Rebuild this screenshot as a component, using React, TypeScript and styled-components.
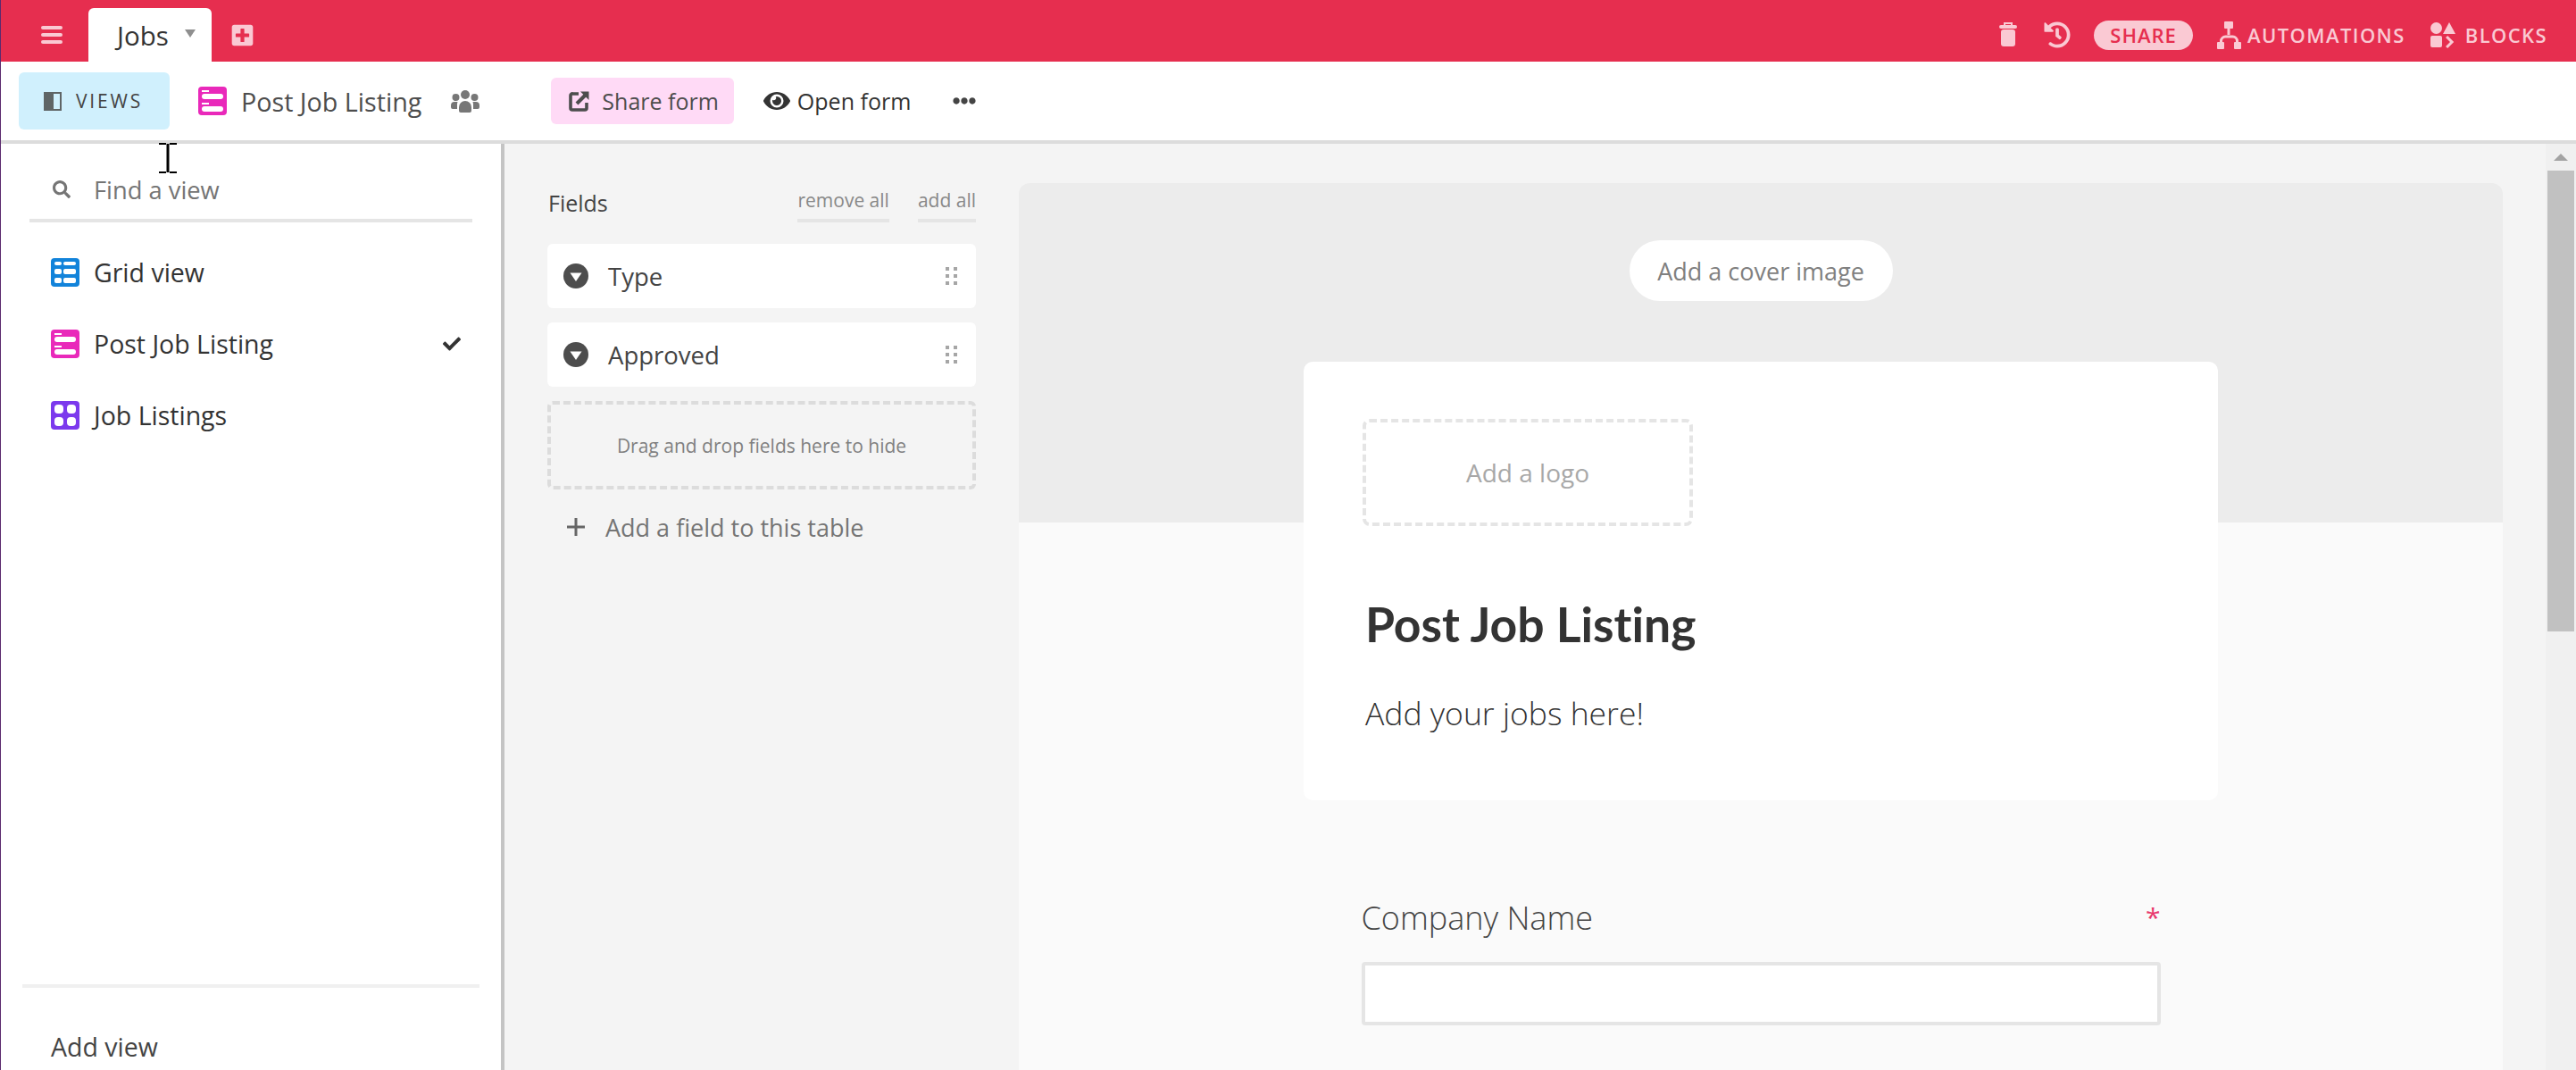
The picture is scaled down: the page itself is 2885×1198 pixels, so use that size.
import * as React from 'react'
import styled, { createGlobalStyle } from 'styled-components'
import { FaCheck, FaEllipsisH, FaEye, FaHistory, FaPlusSquare, FaSearch } from 'react-icons/fa'

const GlobalStyle = createGlobalStyle`
  html, body {
    margin: 0;
    padding: 0;
    background: #fff;
    overflow: hidden;
  }
  * {
    box-sizing: border-box;
  }
  body {
    font-family: "Open Sans", "Noto Sans", sans-serif;
    color: #333;
  }
`

const TINT = '#fac9d3'
const RED = '#e62e4f'

const GridIcon = () => (
  <svg width="32" height="32" viewBox="0 0 32 32">
    <rect width="32" height="32" rx="4" fill="#1283da" />
    <g fill="#fff">
      <rect x="4" y="4" width="8" height="4" rx="2" />
      <rect x="14" y="4" width="14" height="4" rx="2" />
      <rect x="4" y="12" width="8" height="6" rx="2" />
      <rect x="14" y="12" width="14" height="6" rx="2" />
      <rect x="4" y="22" width="8" height="6" rx="2" />
      <rect x="14" y="22" width="14" height="6" rx="2" />
    </g>
  </svg>
)

const FormIcon = () => (
  <svg width="32" height="32" viewBox="0 0 32 32">
    <rect width="32" height="32" rx="4" fill="#e929ba" />
    <g fill="#fff">
      <rect x="4" y="4" width="8" height="2" />
      <rect x="4" y="8" width="24" height="6" rx="3" />
      <rect x="4" y="18" width="8" height="2" />
      <rect x="4" y="22" width="24" height="6" rx="3" />
    </g>
  </svg>
)

const GalleryIcon = () => (
  <svg width="32" height="32" viewBox="0 0 32 32">
    <rect width="32" height="32" rx="4" fill="#7c39ed" />
    <g fill="#fff">
      <rect x="4" y="4" width="10" height="10" rx="4" />
      <rect x="18" y="4" width="10" height="10" rx="4" />
      <rect x="4" y="18" width="10" height="10" rx="4" />
      <rect x="18" y="18" width="10" height="10" rx="4" />
    </g>
  </svg>
)

const MenuIcon = () => (
  <svg width="24" height="20" viewBox="0 0 24 20" fill={TINT}>
    <rect width="24" height="4" rx="2" />
    <rect y="8" width="24" height="4" rx="2" />
    <rect y="16" width="24" height="4" rx="2" />
  </svg>
)

const TrashIcon = () => (
  <svg width="20" height="28" viewBox="0 0 20 28" fill={TINT}>
    <path d="M5 0h10v4h-2V2H7v2H5z" />
    <rect y="3" width="20" height="4" rx="2" />
    <rect x="2" y="8" width="16" height="19" rx="3" />
  </svg>
)

const AutomationIcon = () => (
  <svg width="27" height="31" viewBox="0 0 27 31" fill={TINT}>
    <rect x="8" width="10" height="8" rx="1" />
    <rect x="11.5" y="7" width="3" height="8" />
    <path d="M4.500 24v-2a5 5 0 0 1 5-5h8a5 5 0 0 1 5 5v2" fill="none" stroke={TINT} strokeWidth="3" />
    <rect y="23" width="8" height="8" rx="1" />
    <rect x="19" y="23" width="8" height="8" rx="1" />
  </svg>
)

const BlocksIcon = () => (
  <svg width="28" height="29" viewBox="0 0 28 29" fill={TINT}>
    <circle cx="6.5" cy="6.5" r="6.5" />
    <path d="M21 0l7 13H14z" />
    <rect y="15" width="13" height="13" rx="2" />
    <path d="M17 17l2.200-2 7 7-7 7-2.200-2 5-5z" />
  </svg>
)

const SidebarIcon = () => (
  <svg width="20" height="21" viewBox="0 0 20 21">
    <rect x="1" y="1" width="18" height="19" fill="none" stroke="#5f6566" strokeWidth="2" />
    <rect width="11" height="21" fill="#5f6566" />
  </svg>
)

const ShareIcon = () => (
  <svg width="24" height="24" viewBox="0 0 24 24" fill="none" stroke="#4d4d4d">
    <path d="M11 4H4.500A2 2 0 0 0 2 6v14a2 2 0 0 0 2 2h14a2 2 0 0 0 2-2v-6" strokeWidth="3.600" />
    <path d="M9 15L20 4" strokeWidth="4" />
    <path d="M13 1.500h9.500V11z" fill="#4d4d4d" stroke="none" />
  </svg>
)

const PeopleIcon = () => (
  <svg width="32" height="25" viewBox="0 0 32 25" fill="#777">
    <circle cx="16" cy="5" r="5" />
    <circle cx="5.500" cy="8" r="4" />
    <circle cx="26.500" cy="8" r="4" />
    <path d="M9 19a7 7 0 0 1 14 0v4a2 2 0 0 1-2 2H11a2 2 0 0 1-2-2z" />
    <path d="M0 17a4 4 0 0 1 4-4h3.500A10 10 0 0 0 7 17v4H2a2 2 0 0 1-2-2z" />
    <path d="M32 17a4 4 0 0 0-4-4h-3.500A10 10 0 0 1 25 17v4h5a2 2 0 0 0 2-2z" />
  </svg>
)

const ChoiceIcon = () => (
  <svg width="28" height="28" viewBox="0 0 28 28">
    <circle cx="14" cy="14" r="14" fill="#4d4d4d" />
    <path d="M7.500 10.500h13L14 20z" fill="#fff" />
  </svg>
)

const GripIcon = () => (
  <svg width="13" height="20" viewBox="0 0 13 20" fill="#a6a6a6">
    <rect width="4" height="4" />
    <rect x="9" width="4" height="4" />
    <rect y="8" width="4" height="4" />
    <rect x="9" y="8" width="4" height="4" />
    <rect y="16" width="4" height="4" />
    <rect x="9" y="16" width="4" height="4" />
  </svg>
)

const PlusIcon = () => (
  <svg width="20" height="20" viewBox="0 0 20 20" fill="#666">
    <rect x="8.500" width="3" height="20" />
    <rect y="8.500" width="20" height="3" />
  </svg>
)

const Page = styled.div`
  position: relative;
  display: flex;
  flex-direction: column;
  width: 2885px;
  height: 1198px;
  border-left: 1px solid #5b2a6e;
  overflow: hidden;
`

const TopBar = styled.header`
  flex: 0 0 69px;
  display: flex;
  align-items: center;
  padding: 9px 32px 0 45px;
  background: ${RED};
`

const MenuButton = styled.div`
  display: flex;
`

const Tab = styled.div`
  align-self: flex-end;
  position: relative;
  display: flex;
  align-items: center;
  width: 138px;
  height: 60px;
  margin-left: 29px;
  padding-left: 32px;
  background: #fff;
  border-radius: 6px 6px 0 0;
  font-size: 29.500px;
  color: #333;
`

const TabCaret = styled.span`
  position: absolute;
  left: 108px;
  top: 24px;
  width: 0;
  height: 0;
  border-left: 6px solid transparent;
  border-right: 6px solid transparent;
  border-top: 9px solid #8f8f8f;
`

const AddTab = styled.div`
  display: flex;
  margin-left: 21px;
  color: ${TINT};
  font-size: 27px;
`

const TopActions = styled.div`
  display: flex;
  align-items: center;
  margin-left: auto;
`

const TopIcon = styled.div<{ $left: number }>`
  display: flex;
  margin-left: ${(props) => props.$left}px;
  color: ${TINT};
`

const SharePill = styled.div`
  display: flex;
  align-items: center;
  justify-content: center;
  width: 111px;
  height: 33px;
  margin-left: 26px;
  background: ${TINT};
  border-radius: 17px;
  color: ${RED};
  font-size: 22px;
  font-weight: 600;
  letter-spacing: 1px;
`

const TopAction = styled.div<{ $left: number; $gap: number }>`
  display: flex;
  align-items: center;
  gap: ${(props) => props.$gap}px;
  margin-left: ${(props) => props.$left}px;
  color: ${TINT};
  font-size: 22px;
  font-weight: 600;
  letter-spacing: 1.400px;
`

const SubBar = styled.div`
  flex: 0 0 92px;
  display: flex;
  align-items: center;
  padding-left: 20px;
  background: #fff;
  border-bottom: 4px solid #dcdcdc;
`

const ViewsButton = styled.div`
  display: flex;
  align-items: center;
  gap: 16px;
  width: 169px;
  height: 64px;
  padding-left: 28px;
  background: #d0f0fd;
  border-radius: 6px;
  color: #444;
  font-size: 21px;
  font-weight: 500;
  letter-spacing: 2.800px;
`

const ViewName = styled.div`
  display: flex;
  align-items: center;
  gap: 16px;
  margin-left: 32px;
  color: #4d4d4d;
  font-size: 28.700px;
  white-space: nowrap;
`

const People = styled.div`
  display: flex;
  margin-left: 33px;
`

const FormAction = styled.div<{ $share?: boolean }>`
  display: flex;
  align-items: center;
  gap: ${(props) => (props.$share ? 13 : 8)}px;
  height: 52px;
  padding: 0 17px 0 20px;
  margin-left: ${(props) => (props.$share ? 80 : 13)}px;
  background: ${(props) => (props.$share ? '#ffdaf6' : 'transparent')};
  border-radius: 6px;
  color: ${(props) => (props.$share ? '#4d4d4d' : '#333')};
  font-size: 25px;
  font-weight: 500;
  white-space: nowrap;

  svg {
    flex: none;
  }
`

const MoreButton = styled.div`
  display: flex;
  margin-left: 30px;
  color: #444;
  font-size: 26px;
`

const Body = styled.div`
  flex: 1;
  min-height: 0;
  display: flex;
`

const Sidebar = styled.aside`
  flex: 0 0 564px;
  display: flex;
  flex-direction: column;
  background: #fff;
  border-right: 4px solid #c4c4c4;
`

const SearchRow = styled.div`
  flex: 0 0 88px;
  display: flex;
  align-items: center;
  margin: 0 32px;
  padding: 18px 0 0 26px;
  border-bottom: 4px solid #e5e5e5;
  color: #757575;
  font-size: 27.300px;

  svg {
    margin-right: 26px;
    font-size: 20px;
  }
`

const ViewList = styled.div`
  display: flex;
  flex-direction: column;
  padding: 16px 45px 0 56px;
`

const ViewRow = styled.div`
  display: flex;
  align-items: center;
  height: 80px;
  gap: 16px;
  color: #333;
  font-size: 28.500px;
  font-weight: 500;

  svg:last-child:not(:first-child) {
    margin-left: auto;
    font-size: 20px;
    color: #333;
  }
`

const SidebarFooter = styled.div`
  margin: auto 24px 0;
  height: 96px;
  padding: 46px 32px 0;
  border-top: 4px solid #f0f0f0;
  color: #444;
  font-size: 28.500px;
  font-weight: 500;
  line-height: 40px;
`

const Workspace = styled.main`
  flex: 1;
  min-width: 0;
  display: flex;
  gap: 48px;
  padding: 44px 0 0 48px;
  background: #f4f4f4;
`

const FieldsColumn = styled.section`
  flex: 0 0 480px;
  display: flex;
  flex-direction: column;
`

const FieldsHeader = styled.div`
  display: flex;
  align-items: flex-end;
  height: 44px;
  margin-bottom: 24px;
`

const FieldsTitle = styled.div`
  align-self: center;
  margin-right: auto;
  color: #444;
  font-size: 25px;
  padding-left: 1px;
`

const LinkAction = styled.div<{ $left: number }>`
  margin-left: ${(props) => props.$left}px;
  padding: 1px 0 7px;
  border-bottom: 4px solid #e5e5e5;
  color: #888;
  font-size: 21px;
  line-height: 28px;
`

const FieldCard = styled.div`
  display: flex;
  align-items: center;
  height: 72px;
  margin-bottom: 16px;
  padding: 0 21px 0 18px;
  background: #fff;
  border-radius: 6px;
  color: #444;
  font-size: 27.500px;

  svg:last-child {
    margin-left: auto;
  }
`

const FieldName = styled.span`
  margin-left: 22px;
`

const HideZone = styled.div`
  display: flex;
  align-items: center;
  justify-content: center;
  height: 99px;
  border: 4px dashed #dcdcdc;
  border-radius: 6px;
  color: #808080;
  font-size: 21px;
`

const AddField = styled.div`
  display: flex;
  align-items: center;
  gap: 23px;
  height: 44px;
  margin-top: 20px;
  padding-left: 22px;
  color: #757575;
  font-size: 27px;
`

const FormPane = styled.section`
  flex: 0 0 1662px;
  display: flex;
  flex-direction: column;
  align-items: center;
  background: #fafafa;
  border-radius: 12px 12px 0 0;
  overflow: hidden;
`

const Cover = styled.div`
  align-self: stretch;
  flex: 0 0 380px;
  display: flex;
  justify-content: center;
  padding-top: 64px;
  background: #ececec;
`

const CoverButton = styled.div`
  display: flex;
  align-items: center;
  justify-content: center;
  width: 295px;
  height: 68px;
  background: #fff;
  border-radius: 34px;
  color: #808080;
  font-size: 27px;
`

const HeaderCard = styled.div`
  flex: none;
  width: 1024px;
  height: 491px;
  margin-top: -180px;
  padding: 64px 66px 0;
  background: #fff;
  border-radius: 10px;
`

const LogoBox = styled.div`
  display: flex;
  align-items: center;
  justify-content: center;
  width: 370px;
  height: 120px;
  border: 4px dashed #e5e5e5;
  border-radius: 8px;
  color: #a8a8a8;
  font-size: 28px;
`

const FormTitle = styled.h1`
  margin: 73px 0 0 3px;
  font-family: Lato, "Open Sans", sans-serif;
  font-size: 53.500px;
  font-weight: 700;
  line-height: 72px;
  font-variant-ligatures: none;
  color: #333;
`

const FormSubtitle = styled.p`
  margin: 42px 0 0 3px;
  font-size: 35.500px;
  font-weight: 300;
  line-height: 44px;
  color: #333;
`

const FieldBlock = styled.div`
  flex: none;
  width: 895px;
  margin-top: 110px;
`

const FieldLabelRow = styled.div`
  display: flex;
  justify-content: space-between;
  align-items: flex-start;
  height: 56px;
  font-size: 36px;
  font-weight: 300;
  line-height: 44px;
  color: #444;
`

const Required = styled.span`
  margin-top: 6px;
  color: #e8386d;
  font-size: 30px;
  font-weight: 400;
  line-height: 30px;
`

const TextBox = styled.div`
  height: 71px;
  margin-top: 15px;
  background: #fff;
  border: 4px solid #e5e5e5;
  border-radius: 4px;
`

const ScrollTrack = styled.div`
  flex: 0 0 34px;
  display: flex;
  flex-direction: column;
  align-items: center;
  margin-top: -44px;
  background: #f0f0f0;
`

const ScrollArrow = styled.span`
  margin-top: 11px;
  width: 0;
  height: 0;
  border-left: 8px solid transparent;
  border-right: 8px solid transparent;
  border-bottom: 8px solid #a3a3a3;
`

const ScrollThumb = styled.div`
  width: 30px;
  height: 516px;
  margin-top: 11px;
  background: #c1c1c1;
`

const TextCursor = styled.svg`
  position: absolute;
  left: 177px;
  top: 160px;
`

export default function App() {
  return (
    <Page>
      <GlobalStyle />
      <TopBar>
        <MenuButton>
          <MenuIcon />
        </MenuButton>
        <Tab>
          Jobs
          <TabCaret />
        </Tab>
        <AddTab>
          <FaPlusSquare />
        </AddTab>
        <TopActions>
          <TopIcon $left={0}>
            <TrashIcon />
          </TopIcon>
          <TopIcon $left={30}>
            <FaHistory size={30} />
          </TopIcon>
          <SharePill>SHARE</SharePill>
          <TopAction $left={27} $gap={7}>
            <AutomationIcon />
            AUTOMATIONS
          </TopAction>
          <TopAction $left={28} $gap={11}>
            <BlocksIcon />
            BLOCKS
          </TopAction>
        </TopActions>
      </TopBar>
      <SubBar>
        <ViewsButton>
          <SidebarIcon />
          VIEWS
        </ViewsButton>
        <ViewName>
          <FormIcon />
          Post Job Listing
        </ViewName>
        <People>
          <PeopleIcon />
        </People>
        <FormAction $share>
          <ShareIcon />
          Share form
        </FormAction>
        <FormAction>
          <FaEye size={30} />
          Open form
        </FormAction>
        <MoreButton>
          <FaEllipsisH />
        </MoreButton>
      </SubBar>
      <Body>
        <Sidebar>
          <SearchRow>
            <FaSearch />
            Find a view
          </SearchRow>
          <ViewList>
            <ViewRow>
              <GridIcon />
              Grid view
            </ViewRow>
            <ViewRow>
              <FormIcon />
              Post Job Listing
              <FaCheck />
            </ViewRow>
            <ViewRow>
              <GalleryIcon />
              Job Listings
            </ViewRow>
          </ViewList>
          <SidebarFooter>Add view</SidebarFooter>
        </Sidebar>
        <Workspace>
          <FieldsColumn>
            <FieldsHeader>
              <FieldsTitle>Fields</FieldsTitle>
              <LinkAction $left={0}>remove all</LinkAction>
              <LinkAction $left={32}>add all</LinkAction>
            </FieldsHeader>
            <FieldCard>
              <ChoiceIcon />
              <FieldName>Type</FieldName>
              <GripIcon />
            </FieldCard>
            <FieldCard>
              <ChoiceIcon />
              <FieldName>Approved</FieldName>
              <GripIcon />
            </FieldCard>
            <HideZone>Drag and drop fields here to hide</HideZone>
            <AddField>
              <PlusIcon />
              Add a field to this table
            </AddField>
          </FieldsColumn>
          <FormPane>
            <Cover>
              <CoverButton>Add a cover image</CoverButton>
            </Cover>
            <HeaderCard>
              <LogoBox>Add a logo</LogoBox>
              <FormTitle>Post Job Listing</FormTitle>
              <FormSubtitle>Add your jobs here!</FormSubtitle>
            </HeaderCard>
            <FieldBlock>
              <FieldLabelRow>
                Company Name
                <Required>*</Required>
              </FieldLabelRow>
              <TextBox />
            </FieldBlock>
          </FormPane>
          <ScrollTrack>
            <ScrollArrow />
            <ScrollThumb />
          </ScrollTrack>
        </Workspace>
      </Body>
      <TextCursor width="20" height="34" viewBox="0 0 20 34" fill="#000">
        <rect width="8" height="2" />
        <rect x="12" width="8" height="2" />
        <rect x="8.500" y="1" width="3" height="32" />
        <rect y="32" width="8" height="2" />
        <rect x="12" y="32" width="8" height="2" />
      </TextCursor>
    </Page>
  )
}
